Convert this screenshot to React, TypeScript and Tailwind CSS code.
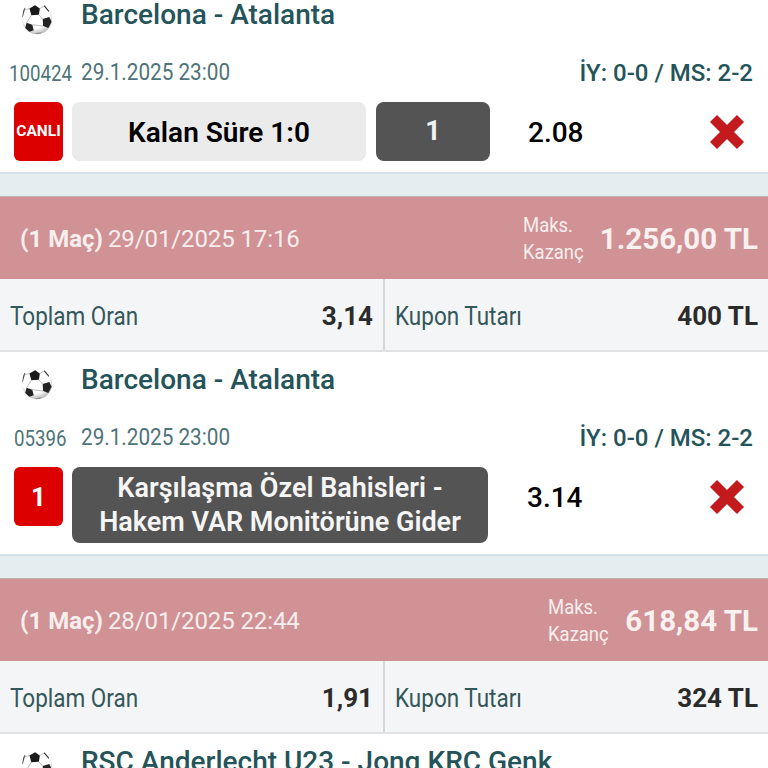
import React from 'react'

function Ball() {
  return (
    <svg width="34" height="34" viewBox="0 0 36 36" className="shrink-0">
      <defs>
        <radialGradient id="ballShade" cx="45%" cy="35%" r="70%">
          <stop offset="65%" stopColor="#ffffff" />
          <stop offset="100%" stopColor="#a8a8a8" />
        </radialGradient>
      </defs>
      <circle cx="18" cy="18" r="16" fill="url(#ballShade)" />
      <path d="M10 7 L16 3.5 L21 7 L20 13.5 L12 14 Z" fill="#1a1a1a" />
      <path d="M24 18 L31 16 L33.5 21 L30 27.5 L24.5 25.5 Z" fill="#242424" />
      <path d="M7 22 L13 24 L14.5 30 L10 31.5 L5.5 27.5 Z" fill="#242424" />
      <path d="M3.5 9 L5 6 L5.6 6.3 L3 16 L2.4 15.6 Z" fill="#444444" />
      <path d="M26 3.5 L31 9.5 L30.2 10.2 L25.2 4.5 Z" fill="#333333" />
      <path d="M16 33 L23 32 L21 34 L17 34.2 Z" fill="#909090" />
      <g stroke="#8a8a8a" strokeWidth="0.6" fill="none">
        <path d="M12 14 L7 22 M20 13.5 L24 18 M13 24 L24.5 25.5 M21 7 L26 4 M10 7 L5 8" />
      </g>
    </svg>
  )
}

function RedX() {
  return (
    <svg width="38" height="38" viewBox="0 0 38 38" className="shrink-0">
      <path d="M5.5 5.5 L32.5 32.5 M32.5 5.5 L5.5 32.5" stroke="#c31a1e" strokeWidth="10" fill="none" />
    </svg>
  )
}

type CardProps = {
  code: string
  codeClass: string
  badge: string
  badgeClass: string
  odd: string
  oddClass: string
  children: React.ReactNode
}

function Title({ text }: { text: string }) {
  return (
    <div className="flex items-center h-[36px] pt-[10px] box-content">
      <div className="w-[81px] flex justify-center pr-[7px] mt-[7px]">
        <Ball />
      </div>
      <span className="text-[28px] font-medium text-[#24545a] whitespace-nowrap">{text}</span>
    </div>
  )
}

function BetCard({ code, codeClass, badge, badgeClass, odd, oddClass, children }: CardProps) {
  return (
    <div className="bg-white">
      <Title text="Barcelona - Atalanta" />
      <div className="flex items-center justify-between h-[30px] mt-[25px] pr-[15px]">
        <div className="flex items-center text-[#4d7479]">
          <span className={`text-[22px] scale-x-[.85] origin-left whitespace-nowrap ${codeClass}`}>{code}</span>
          <span className="text-[23px] scale-x-[.9] origin-left whitespace-nowrap">29.1.2025 23:00</span>
        </div>
        <span className="text-[#24545a] text-[24px] font-medium">İY: 0-0 / MS: 2-2</span>
      </div>
      <div className="flex items-start mt-[14px] pl-[14px] pb-[11px]">
        <div className={`w-[49px] h-[59px] shrink-0 rounded-[6px] bg-[#dc0000] text-white flex items-center justify-center ${badgeClass}`}>
          {badge}
        </div>
        {children}
        <div className={`h-[59px] pt-[2px] flex items-center text-[28px] font-medium text-black ${oddClass}`}>{odd}</div>
        <div className="ml-auto h-[59px] flex items-center pr-[22px]">
          <RedX />
        </div>
      </div>
    </div>
  )
}

function Summary({ info, win, total, amount }: { info: string; win: string; total: string; amount: string }) {
  return (
    <>
      <div className="h-[24px] bg-[#e4eef1] border-t-2 border-[#d5e2ea]" />
      <div className="h-[83px] pt-[2px] bg-[#d09294] border-t border-[#c4b0b2] flex items-center pl-[20px] pr-[10px] text-[#f8eeee]">
        <span className="text-[24px] font-bold">(1 Maç)</span>
        <span className="text-[24px] ml-[5px] tracking-[-0.1px]">{info}</span>
        <div className="ml-auto text-[21px] leading-[27px] scale-x-[.88] origin-left">
          Maks.
          <br />
          Kazanç
        </div>
        <span className="text-[29.5px] font-bold text-[#f9f0f0] ml-[8px]">{win}</span>
      </div>
      <div className="h-[73px] pt-[4px] bg-[#f4f5f6] border-b-2 border-[#e0e2e3] flex">
        <div className="w-[385px] -mt-[4px] pt-[4px] border-r-2 border-[#d5d8d9] flex items-center justify-between pl-[10px] pr-[10px]">
          <span className="text-[26px] text-[#33575a] scale-x-[.865] origin-left whitespace-nowrap">Toplam Oran</span>
          <span className="text-[26px] font-bold text-[#2b2b2b]">{total}</span>
        </div>
        <div className="flex-1 flex items-center justify-between pl-[10px] pr-[10px]">
          <span className="text-[26px] text-[#33575a] scale-x-[.865] origin-left whitespace-nowrap">Kupon Tutarı</span>
          <span className="text-[26px] font-bold text-[#2b2b2b]">{amount}</span>
        </div>
      </div>
    </>
  )
}

export default function App() {
  return (
    <div className="w-[768px] h-[768px] overflow-hidden bg-white font-['Roboto',sans-serif]">
      <div className="-mt-[13px]">
        <BetCard
          code="100424"
          codeClass="ml-[9px] w-[72px]"
          badge="CANLI"
          badgeClass="text-[15.5px] font-bold"
          odd="2.08"
          oddClass="ml-[38px]"
        >
          <div className="ml-[9px] w-[294px] h-[59px] pt-[3px] rounded-[8px] bg-[#ebebeb] text-black text-[28px] font-semibold flex items-center justify-center">
            Kalan Süre 1:0
          </div>
          <div className="ml-[10px] w-[114px] h-[59px] rounded-[8px] bg-[#545454] text-[#f2f2f2] text-[27px] font-bold flex items-center justify-center">
            1
          </div>
        </BetCard>
        <Summary info="29/01/2025 17:16" win="1.256,00 TL" total="3,14" amount="400 TL" />
        <BetCard
          code="05396"
          codeClass="ml-[14px] w-[67px]"
          badge="1"
          badgeClass="text-[26px] font-bold pt-[2px]"
          odd="3.14"
          oddClass="ml-[39px]"
        >
          <div className="ml-[9px] w-[416px] h-[76px] rounded-[8px] bg-[#545454] text-[#f5f5f5] text-[27px] leading-[34px] font-semibold text-center flex items-center justify-center">
            <span>
              Karşılaşma Özel Bahisleri -
              <br />
              Hakem VAR Monitörüne Gider
            </span>
          </div>
        </BetCard>
        <Summary info="28/01/2025 22:44" win="618,84 TL" total="1,91" amount="324 TL" />
        <div className="bg-white">
          <Title text="RSC Anderlecht U23 - Jong KRC Genk" />
        </div>
      </div>
    </div>
  )
}
